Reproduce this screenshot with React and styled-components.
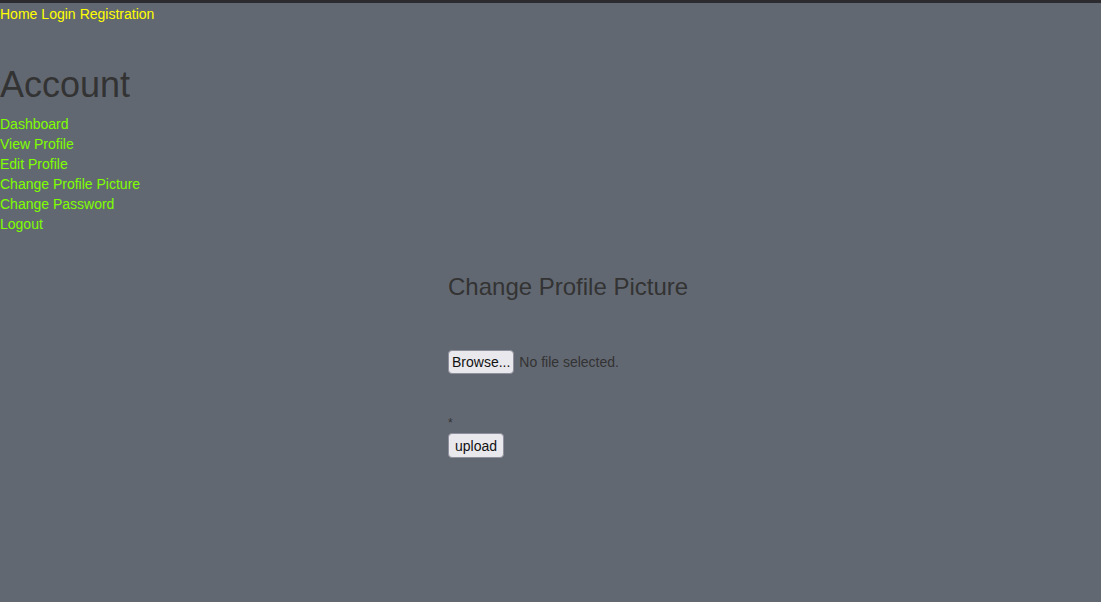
import styled, { createGlobalStyle } from "styled-components";

const Global = createGlobalStyle`
  html, body {
    margin: 0;
    padding: 0;
    height: 100%;
    background: #626872;
  }
  body {
    font-family: "Liberation Sans", Arial, sans-serif;
    font-size: 14px;
    color: #333;
  }
`;

const Page = styled.div`
  min-height: 602px;
  border-top: 3px solid #2b2b30;
  box-sizing: border-box;
`;

const TopNav = styled.nav`
  display: flex;
  gap: 4px;
  padding-top: 3px;
  line-height: 16px;
`;

const NavLink = styled.a`
  color: #ffff00;
  text-decoration: none;
  font-size: 14px;
`;

const Heading = styled.h1`
  margin: 34px 0 0;
  font-size: 36px;
  font-weight: normal;
  line-height: 58px;
  color: #333;
`;

const SideList = styled.ul`
  list-style: none;
  margin: 0;
  padding: 0;
`;

const SideLink = styled.a`
  display: block;
  color: #7fff00;
  text-decoration: none;
  line-height: 20px;
`;

const Main = styled.section`
  padding-left: 448px;
  padding-top: 38px;
`;

const Title = styled.h2`
  margin: 0;
  font-size: 24px;
  font-weight: normal;
  line-height: 30px;
  color: #333;
`;

const FileRow = styled.div`
  display: flex;
  align-items: center;
  gap: 5px;
  margin-top: 48px;
`;

const Button = styled.button`
  font-family: "Liberation Sans", Arial, sans-serif;
  font-size: 14px;
  color: #111;
  background: #e9e9ed;
  border: 1px solid #8f8f9d;
  border-radius: 4px;
  padding: 2px ${(p) => p.$padX || 3}px;
  height: ${(p) => p.$h || 24}px;
`;

const FileText = styled.span`
  color: #333;
`;

const Star = styled.div`
  margin-top: 42px;
  font-size: 12px;
  line-height: 14px;
  color: #333;
`;

const UploadRow = styled.div`
  margin-top: 3px;
`;

const links = [
  "Dashboard",
  "View Profile",
  "Edit Profile",
  "Change Profile Picture",
  "Change Password",
  "Logout",
];

export default function App() {
  return (
    <>
      <Global />
      <Page>
        <TopNav>
          <NavLink href="#">Home</NavLink>
          <NavLink href="#">Login</NavLink>
          <NavLink href="#">Registration</NavLink>
        </TopNav>
        <Heading>Account</Heading>
        <SideList>
          {links.map((l) => (
            <li key={l}>
              <SideLink href="#">{l}</SideLink>
            </li>
          ))}
        </SideList>
        <Main>
          <Title>Change Profile Picture</Title>
          <FileRow>
            <Button type="button">Browse...</Button>
            <FileText>No file selected.</FileText>
          </FileRow>
          <Star>*</Star>
          <UploadRow>
            <Button type="button" $padX={6} $h={25}>
              upload
            </Button>
          </UploadRow>
        </Main>
      </Page>
    </>
  );
}
